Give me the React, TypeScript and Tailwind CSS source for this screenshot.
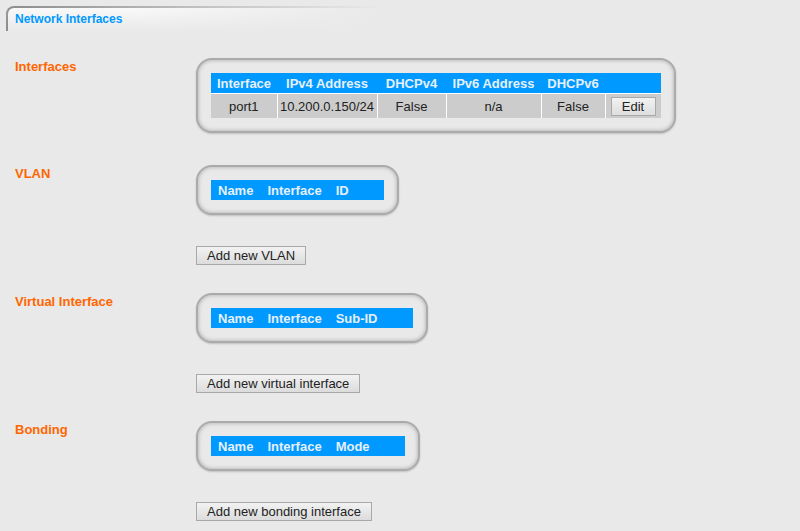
import * as React from "react";

const boxClass =
  "inline-block rounded-[16px] border-2 border-[#ababab] bg-[#e9e9e9] p-[13px] shadow-[inset_0_0_4px_rgba(0,0,0,0.28),0_1px_2px_rgba(0,0,0,0.18)]";

const buttonClass =
  "h-[19px] border border-[#a9a9a9] bg-[linear-gradient(to_bottom,#f2f2f2,#dcdcdc)] px-[10px] text-[13px] leading-[17px] text-[#222]";

function Section({
  label,
  children,
}: {
  label: string;
  children: React.ReactNode;
}) {
  return (
    <div className="flex">
      <div className="w-[196px] shrink-0 pl-[15px] pt-[1px] text-[13px] font-bold leading-[15px] text-[#ff6600]">
        {label}
      </div>
      <div className="flex flex-col items-start">{children}</div>
    </div>
  );
}

function SmallTable({ cols }: { cols: { name: string; w: string }[] }) {
  return (
    <div className={boxClass}>
      <table className="border-collapse">
        <thead>
          <tr className="h-[20px] bg-[#0099ff]">
            {cols.map((c) => (
              <th
                className={`${c.w} px-[7px] pt-[2px] text-left text-[13px] font-bold leading-[15px] text-[#e6f0fa]`}
                key={c.name}
              >
                {c.name}
              </th>
            ))}
            <th className="w-[28px]" />
          </tr>
        </thead>
      </table>
    </div>
  );
}

export default function App() {
  const ifaceHead = [
    { name: "Interface", w: "w-[66px]" },
    { name: "IPv4 Address", w: "w-[100px]" },
    { name: "DHCPv4", w: "w-[69px]" },
    { name: "IPv6 Address", w: "w-[95px]" },
    { name: "DHCPv6", w: "w-[64px]" },
    { name: "", w: "w-[56px]" },
  ];
  const row = ["port1", "10.200.0.150/24", "False", "n/a", "False"];

  return (
    <div className="min-h-screen w-[800px] bg-[#e9e9e9] font-['Liberation_Sans',Arial,sans-serif]">
      {/* title tab */}
      <div className="pl-[6px] pt-[6px]">
        <div className="w-[374px] rounded-tl-[8px] bg-[linear-gradient(to_right,#8c8c8c,#c4c4c4_55%,rgba(233,233,233,0))] pt-[2px]">
          <div className="rounded-tl-[6px] bg-[linear-gradient(to_bottom,#9a9a9a,rgba(233,233,233,0))] pl-[2px]">
            <div className="h-[23px] rounded-tl-[6px] bg-[linear-gradient(to_right,rgba(233,233,233,0)_35%,#e9e9e9),linear-gradient(to_bottom,#f9f9f9,#e9e9e9)] pl-[7px] pt-[4px] text-[12px] font-bold leading-[14px] text-[#0099ff]">
              Network Interfaces
            </div>
          </div>
        </div>
      </div>

      <div className="mt-[27px] flex flex-col">
        <Section label="Interfaces">
          <div className={boxClass}>
            <table className="border-collapse">
              <thead>
                <tr className="h-[20px] bg-[#0099ff]">
                  {ifaceHead.map((c) => (
                    <th
                      className={`${c.w} pt-[2px] text-center text-[13px] font-bold leading-[15px] text-[#e6f0fa]`}
                      key={c.w + c.name}
                    >
                      {c.name}
                    </th>
                  ))}
                </tr>
              </thead>
              <tbody>
                <tr className="h-[24px] border-t border-white bg-[#cccccc]">
                  {row.map((v, i) => (
                    <td
                      className={`pt-[2px] text-center text-[13px] leading-[15px] text-[#222] ${i > 0 ? "border-l border-white" : ""}`}
                      key={i}
                    >
                      {v}
                    </td>
                  ))}
                  <td className="border-l border-white px-[5px]">
                    <button
                      className="h-[19px] w-[45px] border border-[#a9a9a9] bg-[linear-gradient(to_bottom,#f2f2f2,#dedede)] text-[13px] leading-[17px] text-[#222]"
                      type="button"
                    >
                      Edit
                    </button>
                  </td>
                </tr>
              </tbody>
            </table>
          </div>
        </Section>

        <div className="mt-[32px]">
          <Section label="VLAN">
            <SmallTable
              cols={[
                { name: "Name", w: "w-[49px]" },
                { name: "Interface", w: "w-[67px]" },
                { name: "ID", w: "w-[27px]" },
              ]}
            />
            <button className={`mt-[31px] ${buttonClass}`} type="button">
              Add new VLAN
            </button>
          </Section>
        </div>

        <div className="mt-[28px]">
          <Section label="Virtual Interface">
            <SmallTable
              cols={[
                { name: "Name", w: "w-[49px]" },
                { name: "Interface", w: "w-[67px]" },
                { name: "Sub-ID", w: "w-[56px]" },
              ]}
            />
            <button className={`mt-[31px] ${buttonClass}`} type="button">
              Add new virtual interface
            </button>
          </Section>
        </div>

        <div className="mt-[28px]">
          <Section label="Bonding">
            <SmallTable
              cols={[
                { name: "Name", w: "w-[49px]" },
                { name: "Interface", w: "w-[67px]" },
                { name: "Mode", w: "w-[48px]" },
              ]}
            />
            <button className={`mt-[31px] ${buttonClass}`} type="button">
              Add new bonding interface
            </button>
          </Section>
        </div>
      </div>
    </div>
  );
}
